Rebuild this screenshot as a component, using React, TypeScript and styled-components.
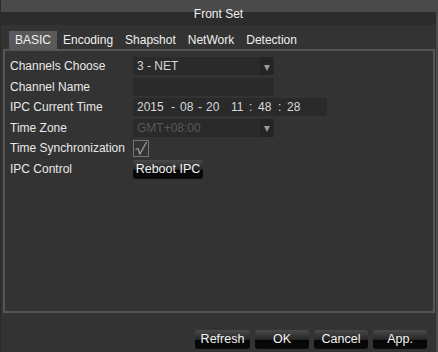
import styled, { createGlobalStyle } from "styled-components";

const Global = createGlobalStyle`
  html, body {
    margin: 0;
    padding: 0;
    background: #333333;
  }
  body {
    font-family: "Liberation Sans", Arial, sans-serif;
    font-size: 12px;
  }
`;

const Window = styled.div`
  width: 438px;
  height: 352px;
  box-sizing: border-box;
  background: #333333;
  border-left: 1px solid #2a2a2a;
  border-right: 2px solid #4a4a4a;
  display: flex;
  flex-direction: column;
  color: #e8e8e8;
`;

const TitleBar = styled.div`
  height: 25px;
  flex: none;
  background: linear-gradient(#4a4a4a 0 12px, #2c2c2c 12px);
  color: #f0f0f0;
  text-align: center;
  line-height: 28px;
  font-size: 12px;
`;

const TabRow = styled.div`
  display: flex;
  padding: 6px 0 0 8px;
  height: 18px;
  flex: none;
`;

const Tab = styled.div<{ $active?: boolean }>`
  height: 18px;
  line-height: 18px;
  padding: 0 6px;
  background: ${(p) => (p.$active ? "#595959" : "transparent")};
  color: #f0f0f0;
  font-size: 12px;
`;

const Panel = styled.div`
  margin: 0 1px 0 2px;
  height: 264px;
  flex: none;
  box-sizing: border-box;
  border: 2px solid #555555;
  padding: 6px 0 0 5px;
  display: grid;
  grid-template-columns: 123px 1fr;
  grid-auto-rows: 20.5px;
  align-items: start;
`;

const Label = styled.div`
  height: 18px;
  line-height: 18px;
  white-space: nowrap;
  color: #e8e8e8;
`;

const Field = styled.div<{ $width: number; $disabled?: boolean }>`
  width: ${(p) => p.$width}px;
  height: 18px;
  line-height: 19px;
  background: #2a2a2a;
  box-sizing: border-box;
  padding-left: 4px;
  position: relative;
  white-space: pre;
  color: ${(p) => (p.$disabled ? "#585858" : "#d8d8d8")};
`;

const Arrow = styled.div`
  position: absolute;
  right: 1px;
  top: 0;
  width: 13px;
  height: 18px;
  background: #242424;
  display: flex;
  align-items: center;
  justify-content: center;
  &::after {
    content: "";
    margin-top: 3px;
    border-left: 3.5px solid transparent;
    border-right: 3.5px solid transparent;
    border-top: 6px solid #9a9a9a;
  }
`;

const TimeParts = styled.div`
  display: flex;
`;

const Part = styled.span<{ $w: number }>`
  display: inline-block;
  width: ${(p) => p.$w}px;
`;

const Check = styled.div`
  width: 16px;
  height: 17px;
  margin-top: 1px;
  box-sizing: border-box;
  border: 1px solid #767676;
`;

const Button = styled.button<{ $w: number }>`
  width: ${(p) => p.$w}px;
  height: 19px;
  padding: 0;
  border: none;
  border-radius: 3px;
  background: linear-gradient(#4a4a4a 0%, #262626 50%, #050505 52%, #0a0a0a 100%);
  color: #f4f4f4;
  font-family: "Liberation Sans", Arial, sans-serif;
  font-size: 12.5px;
  line-height: 19px;
  cursor: pointer;
`;

const Footer = styled.div`
  display: flex;
  justify-content: flex-end;
  gap: 5px;
  padding: 17px 9px 0 0;
`;

export default function App() {
  return (
    <>
      <Global />
      <Window>
        <TitleBar>Front Set</TitleBar>
        <TabRow>
          <Tab $active>BASIC</Tab>
          <Tab>Encoding</Tab>
          <Tab>Shapshot</Tab>
          <Tab>NetWork</Tab>
          <Tab>Detection</Tab>
        </TabRow>
        <Panel>
          <Label>Channels Choose</Label>
          <Field $width={141}>
            3 - NET
            <Arrow />
          </Field>
          <Label>Channel Name</Label>
          <Field $width={141} />
          <Label>IPC Current Time</Label>
          <Field $width={194}>
            <TimeParts>
              <Part $w={34}>2015</Part>
              <Part $w={9}>-</Part>
              <Part $w={18}>08</Part>
              <Part $w={8}>-</Part>
              <Part $w={25}>20</Part>
              <Part $w={18}>11</Part>
              <Part $w={9}>:</Part>
              <Part $w={20}>48</Part>
              <Part $w={9}>:</Part>
              <Part $w={18}>28</Part>
            </TimeParts>
          </Field>
          <Label>Time Zone</Label>
          <Field $width={141} $disabled>
            GMT+08:00
            <Arrow />
          </Field>
          <Label>Time Synchronization</Label>
          <Check>
            <svg width="14" height="15" viewBox="0 0 14 15">
              <polyline
                points="1.5,8.5 4,7.5 6,13 12.5,1"
                fill="none"
                stroke="#a0a0a0"
                strokeWidth="1.2"
              />
            </svg>
          </Check>
          <Label>IPC Control</Label>
          <Button $w={70}>Reboot IPC</Button>
        </Panel>
        <Footer>
          <Button $w={55}>Refresh</Button>
          <Button $w={54}>OK</Button>
          <Button $w={54}>Cancel</Button>
          <Button $w={54}>App.</Button>
        </Footer>
      </Window>
    </>
  );
}
